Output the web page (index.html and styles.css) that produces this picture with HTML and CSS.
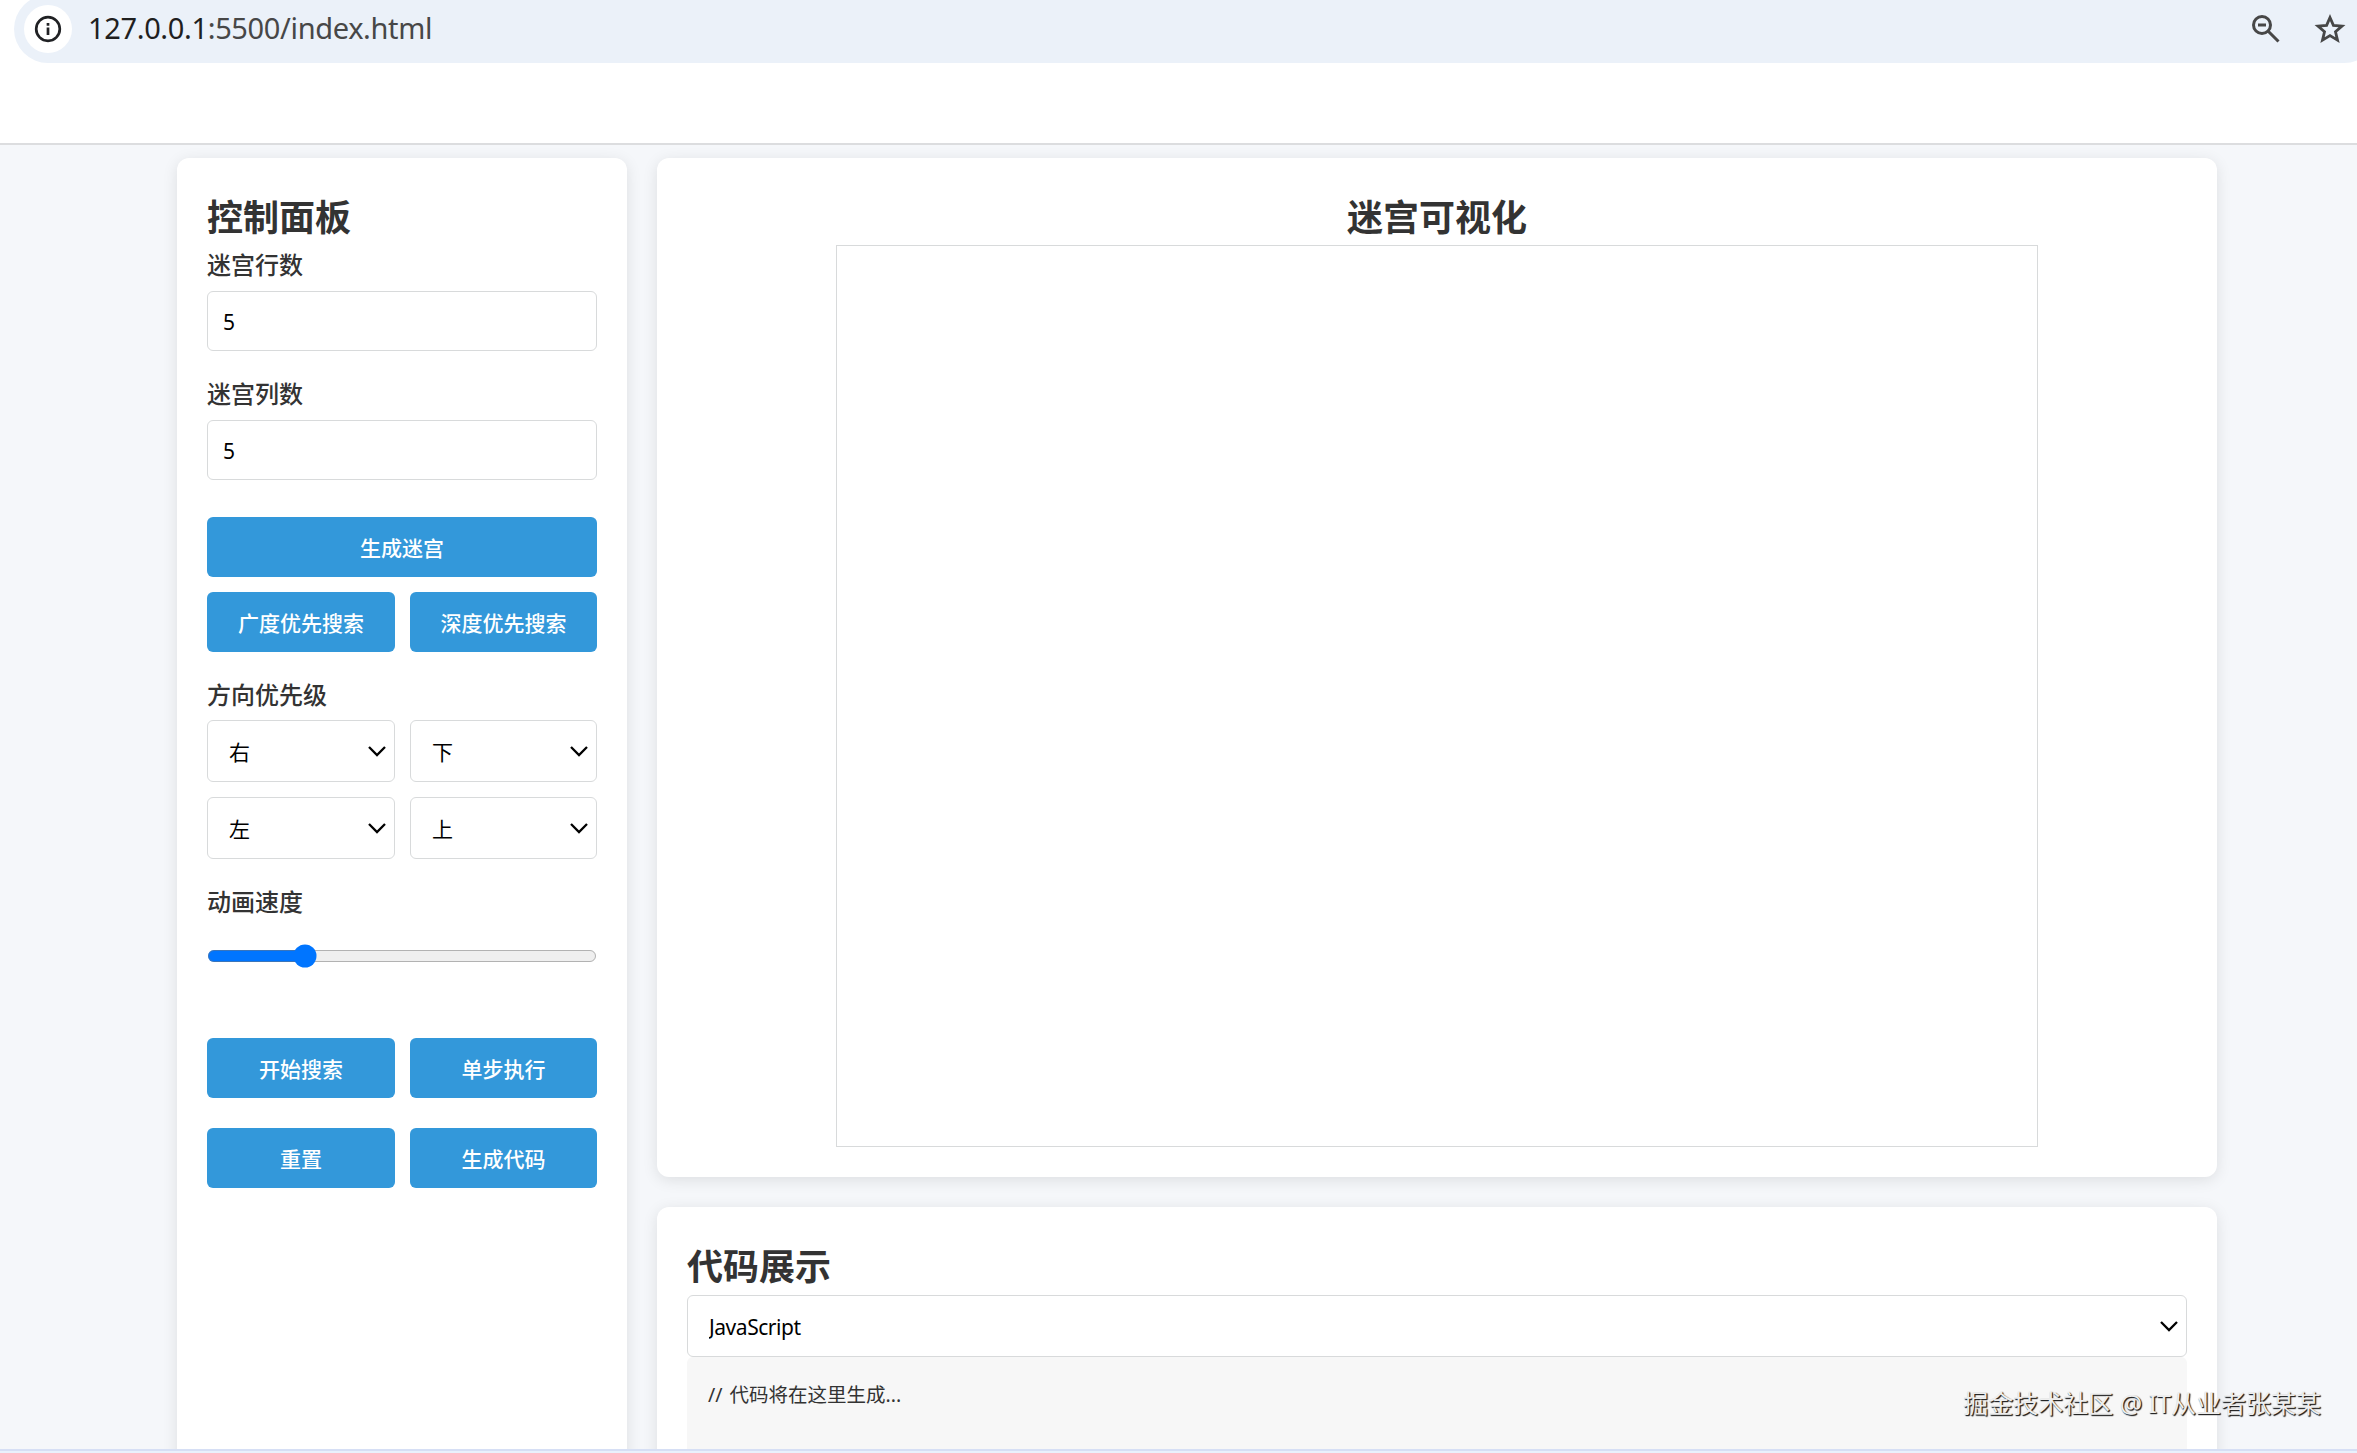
FILE: index.html
```html
<!DOCTYPE html>
<html lang="zh-CN">
<head>
    <meta charset="UTF-8">
    <meta name="viewport" content="width=device-width, initial-scale=1.0">
    <title>迷宫可视化</title>
    <link rel="stylesheet" href="styles.css">
</head>
<body>
    <header class="browser-bar">
        <div class="address">
            <span class="info">
                <svg width="28" height="28" viewBox="0 0 28 28" fill="none" stroke="#202124" stroke-width="2.7">
                    <circle cx="14" cy="14" r="11.8"/>
                    <path d="M14 12.5v7.5M14 8v2.7"/>
                </svg>
            </span>
            <span class="url"><span class="host">127.0.0.1</span>:5500/index.html</span>
            <span class="tools">
                <svg width="30" height="30" viewBox="0 0 30 30" fill="none" stroke="#474747" stroke-width="3">
                    <circle cx="11" cy="11" r="8.5"/>
                    <path d="M7 11h8M17 17l10.5 10.5"/>
                </svg>
                <svg width="32" height="32" viewBox="0 0 32 32" fill="none" stroke="#474747" stroke-width="2.8">
                    <path d="M16 4.5l3.4 7.9 8.6.7-6.5 5.6 2 8.4-7.5-4.5-7.5 4.5 2-8.4-6.5-5.6 8.6-.7z"/>
                </svg>
            </span>
        </div>
    </header>
    <main class="container">
        <aside class="card control-panel">
            <h2>控制面板</h2>
            <div class="form-group">
                <label for="rows">迷宫行数</label>
                <input type="text" id="rows" value="5">
            </div>
            <div class="form-group">
                <label for="cols">迷宫列数</label>
                <input type="text" id="cols" value="5">
            </div>
            <div class="button-grid top-buttons">
                <button class="wide">生成迷宫</button>
                <button>广度优先搜索</button>
                <button>深度优先搜索</button>
            </div>
            <label class="direction-label">方向优先级</label>
            <div class="button-grid">
                <select><option>右</option></select>
                <select><option>下</option></select>
                <select><option>左</option></select>
                <select><option>上</option></select>
            </div>
            <label class="speed-label" for="speed">动画速度</label>
            <input type="range" id="speed" min="0" max="1000" value="235">
            <div class="button-grid actions">
                <button>开始搜索</button>
                <button>单步执行</button>
                <button>重置</button>
                <button>生成代码</button>
            </div>
        </aside>
        <div class="content">
            <section class="card maze">
                <h2>迷宫可视化</h2>
                <canvas id="maze" width="1200" height="900"></canvas>
            </section>
            <section class="card code">
                <h2>代码展示</h2>
                <select><option>JavaScript</option></select>
                <pre>// 代码将在这里生成...</pre>
            </section>
        </div>
    </main>
    <footer class="bottom-edge"></footer>
    <div class="watermark">掘金技术社区 @ IT从业者张某某</div>
</body>
</html>
```
FILE: styles.css
```css
* {
    box-sizing: border-box;
    margin: 0;
    padding: 0;
}
body {
    display: flex;
    flex-direction: column;
    height: 1453px;
    overflow: hidden;
    background-color: #f5f7fa;
    color: #333;
    font-family: "Noto Sans", "Noto Sans CJK SC", sans-serif;
    line-height: 1.6;
}
.browser-bar {
    flex: none;
    height: 145px;
    padding-left: 14px;
    background-color: #fff;
    border-bottom: 2px solid #dcdddf;
    overflow: hidden;
}
.address {
    display: flex;
    align-items: center;
    width: 2364px;
    height: 68px;
    margin-top: -5px;
    padding-left: 10px;
    border-radius: 34px;
    background-color: #ebf1f9;
}
.info {
    display: flex;
    align-items: center;
    justify-content: center;
    width: 48px;
    height: 48px;
    border-radius: 50%;
    background-color: #fff;
}
.url {
    margin: -2px 0 0 16px;
    color: #474747;
    font-size: 29px;
    letter-spacing: -0.35px;
}
.host {
    color: #1f1f1f;
}
.tools {
    display: flex;
    align-items: center;
    gap: 33px;
    margin-left: auto;
    margin-right: 32px;
}
.container {
    flex: 1;
    display: flex;
    gap: 30px;
    min-height: 0;
    padding: 13px 140px 0 177px;
    overflow: hidden;
}
.card {
    padding: 30px;
    border-radius: 12px;
    background-color: #fff;
    box-shadow: 0 3px 15px rgba(0, 0, 0, 0.1);
}
.control-panel {
    flex: none;
    width: 450px;
    height: 1400px;
}
.content {
    flex: 1;
    display: flex;
    flex-direction: column;
    gap: 30px;
}
h2 {
    height: 57px;
    font-size: 36px;
    line-height: 59px;
}
label {
    display: block;
    height: 38px;
    margin-bottom: 8px;
    font-size: 24px;
    font-weight: 500;
    line-height: 40px;
}
.form-group {
    margin-bottom: 23px;
}
input[type="text"], select {
    display: block;
    width: 100%;
    height: 60px;
    padding: 2px 15px 0;
    border: 1px solid #d8dadb;
    border-radius: 6px;
    background-color: #fff;
    color: #000;
    font-family: inherit;
    font-size: 21px;
}
select {
    height: 62px;
    padding: 1px 21px 0;
    appearance: none;
    background-image: url("data:image/svg+xml,%3Csvg xmlns='http://www.w3.org/2000/svg' width='18' height='11' fill='none' stroke='black' stroke-width='2.3'%3E%3Cpath d='M1 1l8 8 8-8'/%3E%3C/svg%3E");
    background-repeat: no-repeat;
    background-position: right 8px center;
}
button {
    height: 60px;
    border: none;
    border-radius: 6px;
    background-color: #3398da;
    color: #fff;
    font-family: inherit;
    font-size: 21px;
    font-weight: 500;
    cursor: pointer;
}
.button-grid {
    display: grid;
    grid-template-columns: 188px 187px;
    gap: 15px;
}
.top-buttons {
    padding-top: 14px;
}
.wide {
    grid-column: span 2;
}
.direction-label {
    margin: 23px 0 7px;
}
.speed-label {
    margin: 23px 0 0;
}
input[type="range"] {
    display: block;
    zoom: 1.5;
    width: 260px;
    height: 16px;
    margin: 16px 0 0;
}
.actions {
    row-gap: 30px;
    margin-top: 70px;
}
.maze {
    flex: none;
    height: 1019px;
    text-align: center;
}
.maze canvas {
    display: block;
    margin: 0 auto;
    border: 1px solid #d8dadb;
}
.code {
    flex: none;
    height: 400px;
}
.code h2 {
    height: 58px;
    line-height: 60px;
}
.code select {
    background-position: right 8px center;
    letter-spacing: -0.45px;
}
pre {
    height: 300px;
    padding: 22px 21px;
    border-radius: 6px;
    background-color: #f7f7f7;
    font-family: inherit;
    font-size: 19.5px;
    word-spacing: 2px;
}
.bottom-edge {
    flex: none;
    height: 4px;
    border-top: 2px solid #d6dff5;
    background-color: #e9f1fc;
}
.watermark {
    position: absolute;
    right: 36px;
    bottom: 30px;
    color: #eee;
    font-size: 25px;
    text-shadow: 1px 1px 1px #222, 1px 1px 1px #333;
}
```
